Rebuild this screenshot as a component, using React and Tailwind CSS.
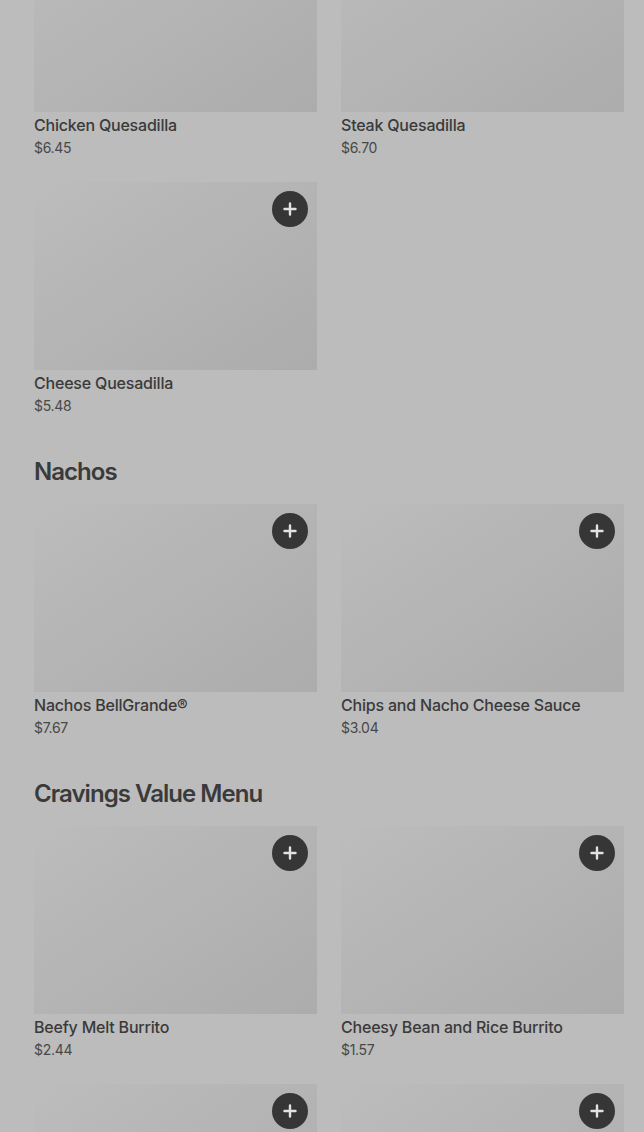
import React from 'react';

const SECTIONS = [
    {
        title: null,
        items: [
            { name: 'Chicken Quesadilla', price: '$6.45' },
            { name: 'Steak Quesadilla', price: '$6.70' },
            { name: 'Cheese Quesadilla', price: '$5.48' },
        ],
    },
    {
        title: 'Nachos',
        items: [
            { name: 'Nachos BellGrande®', price: '$7.67' },
            { name: 'Chips and Nacho Cheese Sauce', price: '$3.04' },
        ],
    },
    {
        title: 'Cravings Value Menu',
        items: [
            { name: 'Beefy Melt Burrito', price: '$2.44' },
            { name: 'Cheesy Bean and Rice Burrito', price: '$1.57' },
            // below the fold, only the image top shows
            { name: null, price: null },
            { name: null, price: null },
        ],
    },
];

const PlusIcon = () => (
    <svg width="14" height="14" viewBox="0 0 14 14" fill="none">
        <path d="M7 1.5v11M1.5 7h11" stroke="#e2e2e2" strokeWidth="2.4" strokeLinecap="round" />
    </svg>
);

const MenuCard = ({ item }) => (
    <div className="flex flex-col">
        <div className="relative h-[188px] bg-gradient-to-br from-[#bcbcbc] to-[#acacac]">
            <button className="absolute top-[9px] right-[9px] w-9 h-9 rounded-full bg-[#363636] flex items-center justify-center">
                <PlusIcon />
            </button>
        </div>
        {item.name && (
            <>
                <p className="text-base leading-[26px] font-medium tracking-[-0.2px] text-[#3a3a3a]">{item.name}</p>
                <p className="text-sm leading-5 tracking-[-0.3px] text-[#484848]">{item.price}</p>
            </>
        )}
    </div>
);

export default function App() {
    return (
        <div
            className="h-[1132px] overflow-hidden bg-[#bcbcbc] pl-[34px] pr-[20px]"
            style={{ fontFamily: 'Inter, "Noto Sans", sans-serif' }}
        >
            <div className="-mt-[76px]">
                {SECTIONS.map((section, i) => (
                    <section key={i} className={section.title ? 'pt-[40px]' : ''}>
                        {section.title && (
                            <h2 className="text-2xl leading-8 font-semibold tracking-[-0.04em] text-[#3a3a3a] mb-[16px]">
                                {section.title}
                            </h2>
                        )}
                        <div className="grid grid-cols-2 gap-x-6 gap-y-6">
                            {section.items.map((item, j) => (
                                <MenuCard key={j} item={item} />
                            ))}
                        </div>
                    </section>
                ))}
            </div>
        </div>
    );
}
